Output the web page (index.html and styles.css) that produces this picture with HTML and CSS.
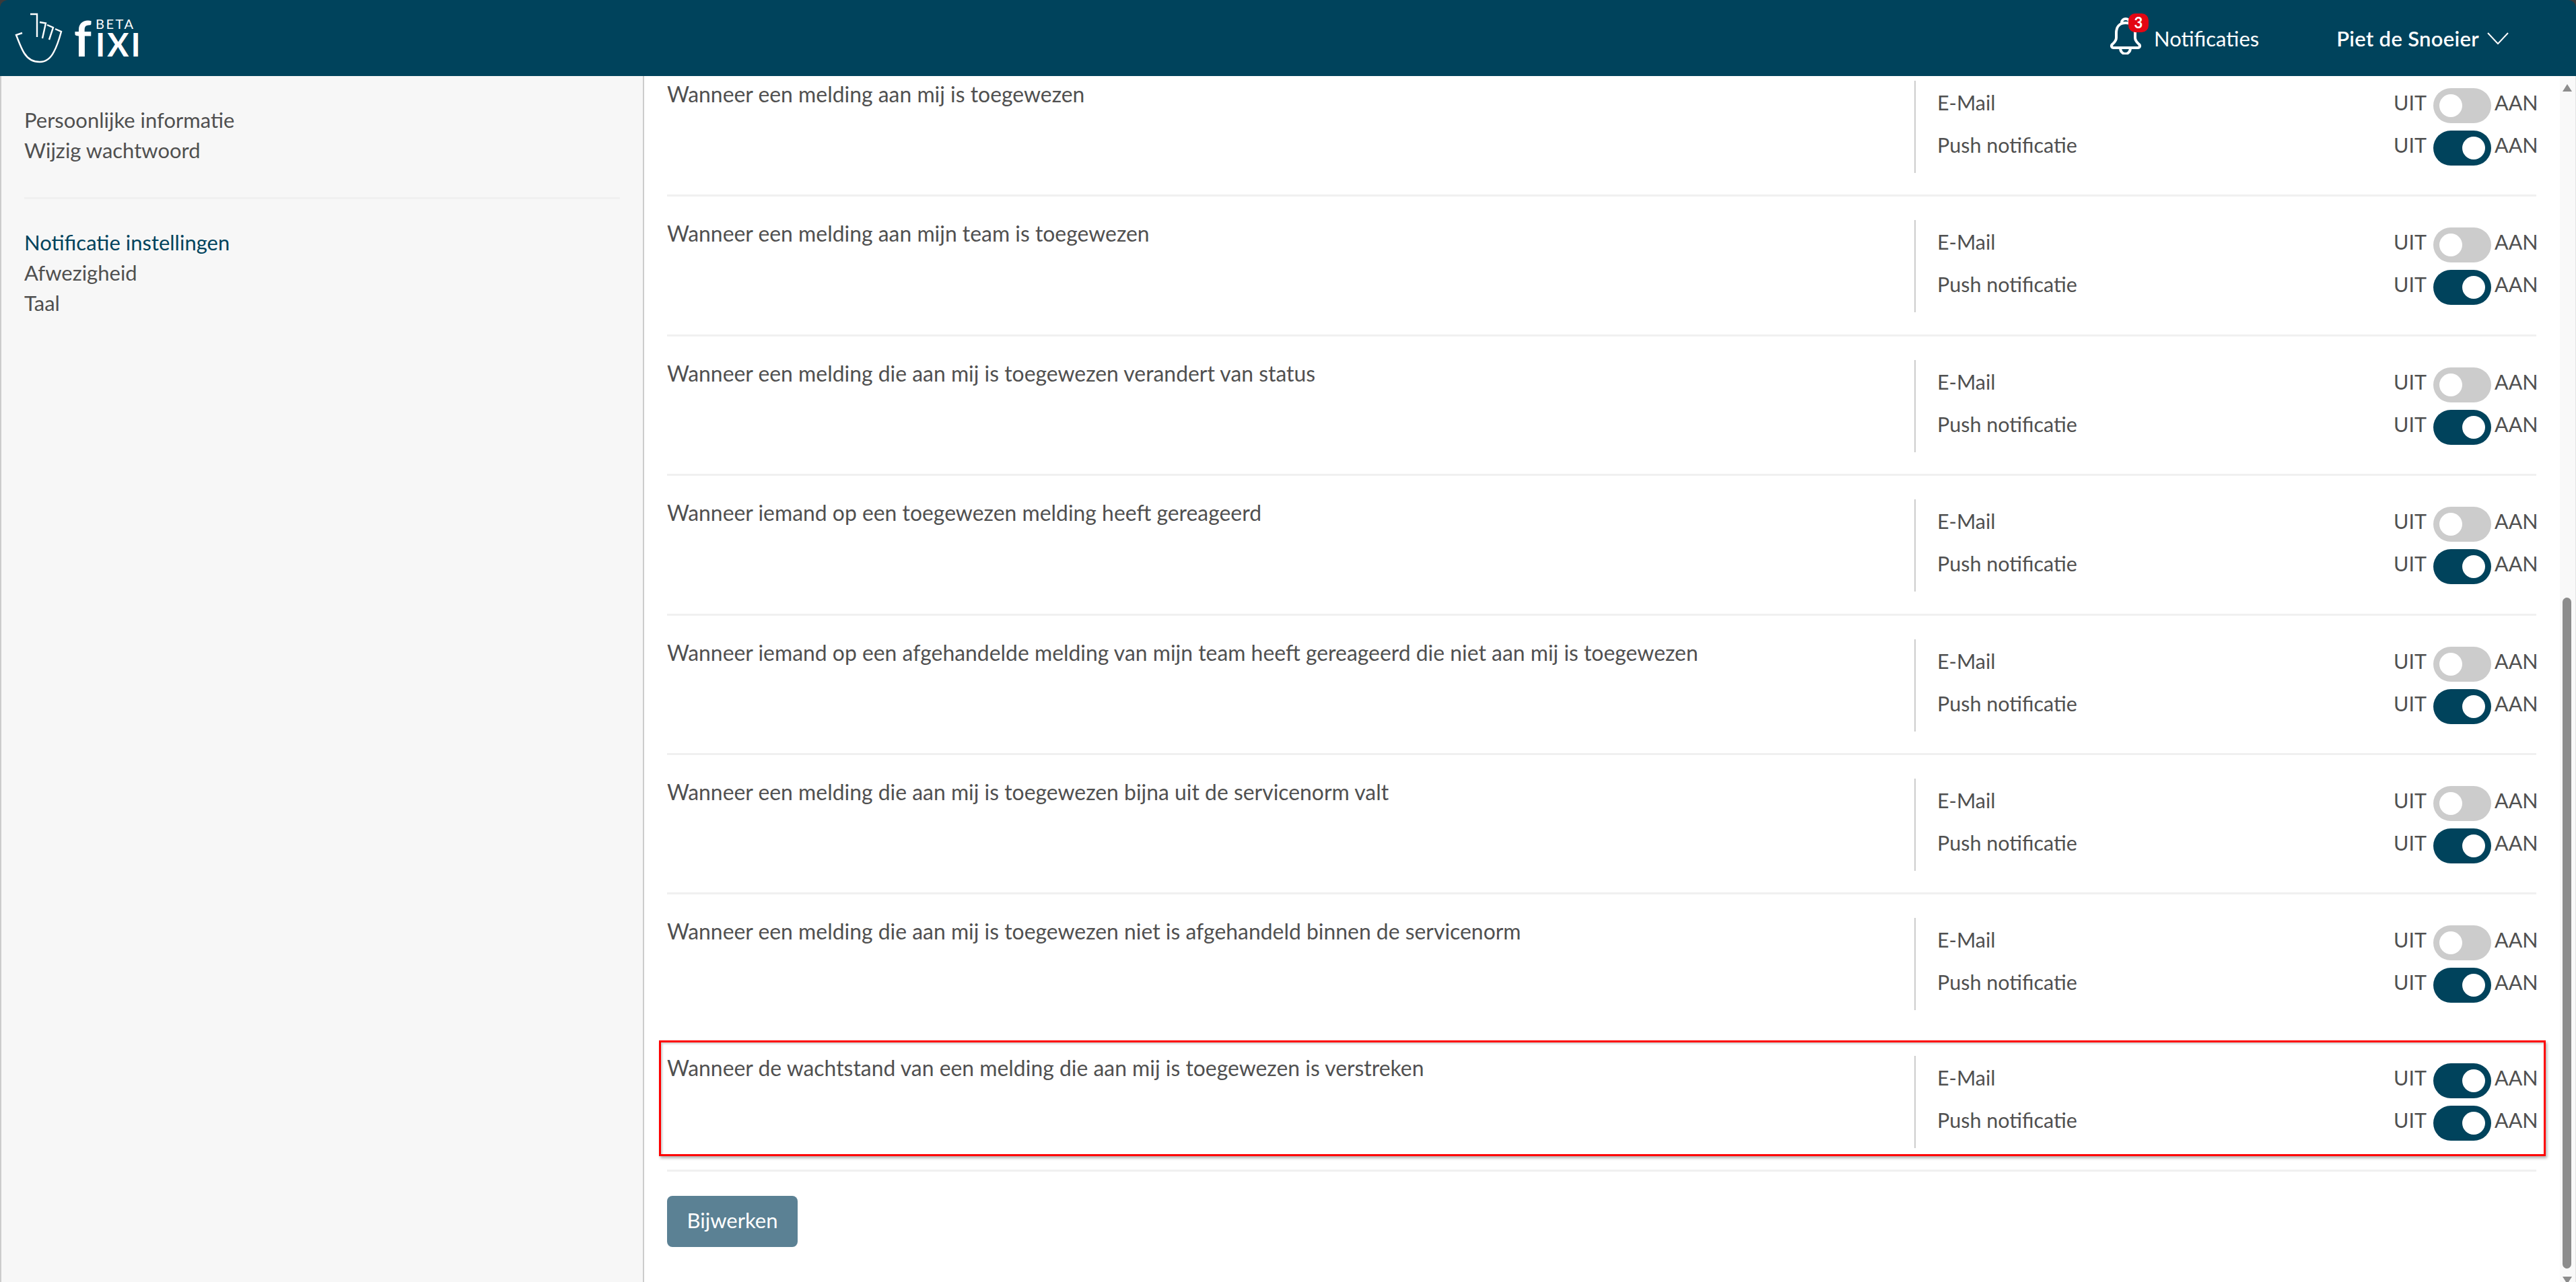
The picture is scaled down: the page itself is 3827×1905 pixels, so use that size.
FILE: index.html
```html
<!DOCTYPE html>
<html lang="nl">
<head>
<meta charset="utf-8">
<title>Fixi - Notificatie instellingen</title>
<link rel="stylesheet" href="styles.css">
</head>
<body>
<header class="topbar">
  <a class="logo">
    <svg class="logo-hand" viewBox="22 19 71 75" width="71" height="75" fill="none" stroke="#fff" stroke-width="2.4">
      <path d="M45 21H55L55 55"/>
      <path d="M59 33L68 34.500L63 57"/>
      <path d="M70 37L79 41L73 59"/>
      <path d="M82 43L91 47C88 58 85 68 80 77C75 87 68 92 59 92C49 92 41 87 36 79C31 71 28 62 24 52L33 49"/>
    </svg>
    <span class="logo-f">f</span>
    <span class="logo-stack"><span class="logo-beta">BETA</span><span class="logo-ixi">IXI</span></span>
  </a>
  <div class="topbar-right">
    <a class="notif">
      <span class="bell">
        <svg viewBox="0 0 46 56" width="46" height="56" fill="none" stroke="#fff" stroke-width="4" stroke-linejoin="round">
          <path d="M23 9C13 9 9 16 9 24V31C9 36 5 39 3 41C1 43 2 46 5 46H41C44 46 45 43 43 41C41 39 37 36 37 31V24C37 16 33 9 23 9Z"/>
          <path d="M17 9C17 1 29 1 29 9"/>
          <path d="M15 46C15 58 30 58 30 46"/>
        </svg>
        <span class="badge">3</span>
      </span>
      <span>Notificaties</span>
    </a>
    <a class="user">
      <span>Piet de Snoeier</span>
      <svg viewBox="0 0 32 18" width="32" height="18" fill="none" stroke="#fff" stroke-width="2"><path d="M1 1L16 17L31 1"/></svg>
    </a>
  </div>
</header>

<div class="shell">
  <aside class="sidebar">
    <nav class="side-group">
      <a>Persoonlijke informatie</a>
      <a>Wijzig wachtwoord</a>
    </nav>
    <hr class="side-rule">
    <nav class="side-group">
      <a class="active">Notificatie instellingen</a>
      <a>Afwezigheid</a>
      <a>Taal</a>
    </nav>
  </aside>

  <main class="content">
    <div class="scroller">
      <section class="row">
        <p class="row-title">Wanneer een melding aan mij is toegewezen</p>
        <div class="channels">
          <div class="channel"><span class="channel-name">E-Mail</span><span class="state">UIT</span><span class="toggle"></span><span class="state">AAN</span></div>
          <div class="channel"><span class="channel-name">Push notificatie</span><span class="state">UIT</span><span class="toggle on"></span><span class="state">AAN</span></div>
        </div>
      </section>
      <section class="row">
        <p class="row-title">Wanneer een melding aan mijn team is toegewezen</p>
        <div class="channels">
          <div class="channel"><span class="channel-name">E-Mail</span><span class="state">UIT</span><span class="toggle"></span><span class="state">AAN</span></div>
          <div class="channel"><span class="channel-name">Push notificatie</span><span class="state">UIT</span><span class="toggle on"></span><span class="state">AAN</span></div>
        </div>
      </section>
      <section class="row">
        <p class="row-title">Wanneer een melding die aan mij is toegewezen verandert van status</p>
        <div class="channels">
          <div class="channel"><span class="channel-name">E-Mail</span><span class="state">UIT</span><span class="toggle"></span><span class="state">AAN</span></div>
          <div class="channel"><span class="channel-name">Push notificatie</span><span class="state">UIT</span><span class="toggle on"></span><span class="state">AAN</span></div>
        </div>
      </section>
      <section class="row">
        <p class="row-title">Wanneer iemand op een toegewezen melding heeft gereageerd</p>
        <div class="channels">
          <div class="channel"><span class="channel-name">E-Mail</span><span class="state">UIT</span><span class="toggle"></span><span class="state">AAN</span></div>
          <div class="channel"><span class="channel-name">Push notificatie</span><span class="state">UIT</span><span class="toggle on"></span><span class="state">AAN</span></div>
        </div>
      </section>
      <section class="row">
        <p class="row-title">Wanneer iemand op een afgehandelde melding van mijn team heeft gereageerd die niet aan mij is toegewezen</p>
        <div class="channels">
          <div class="channel"><span class="channel-name">E-Mail</span><span class="state">UIT</span><span class="toggle"></span><span class="state">AAN</span></div>
          <div class="channel"><span class="channel-name">Push notificatie</span><span class="state">UIT</span><span class="toggle on"></span><span class="state">AAN</span></div>
        </div>
      </section>
      <section class="row">
        <p class="row-title">Wanneer een melding die aan mij is toegewezen bijna uit de servicenorm valt</p>
        <div class="channels">
          <div class="channel"><span class="channel-name">E-Mail</span><span class="state">UIT</span><span class="toggle"></span><span class="state">AAN</span></div>
          <div class="channel"><span class="channel-name">Push notificatie</span><span class="state">UIT</span><span class="toggle on"></span><span class="state">AAN</span></div>
        </div>
      </section>
      <section class="row row-plain">
        <p class="row-title">Wanneer een melding die aan mij is toegewezen niet is afgehandeld binnen de servicenorm</p>
        <div class="channels">
          <div class="channel"><span class="channel-name">E-Mail</span><span class="state">UIT</span><span class="toggle"></span><span class="state">AAN</span></div>
          <div class="channel"><span class="channel-name">Push notificatie</span><span class="state">UIT</span><span class="toggle on"></span><span class="state">AAN</span></div>
        </div>
      </section>
      <section class="row row-new">
        <div class="highlight"></div>
        <p class="row-title">Wanneer de wachtstand van een melding die aan mij is toegewezen is verstreken</p>
        <div class="channels">
          <div class="channel"><span class="channel-name">E-Mail</span><span class="state">UIT</span><span class="toggle on"></span><span class="state">AAN</span></div>
          <div class="channel"><span class="channel-name">Push notificatie</span><span class="state">UIT</span><span class="toggle on"></span><span class="state">AAN</span></div>
        </div>
      </section>
      <button class="submit">Bijwerken</button>
    </div>
  </main>

  <div class="scrollbar">
    <span class="arrow-up"></span>
    <span class="track"><span class="thumb"></span></span>
    <span class="arrow-down"></span>
  </div>
</div>
</body>
</html>
```

FILE: styles.css
```css
* { box-sizing: border-box; }
html, body { margin: 0; height: 100%; background: #3a3a3a; }
body {
  height: 1905px;
  overflow: hidden;
  display: flex;
  flex-direction: column;
  font-family: Lato, "Liberation Sans", sans-serif;
  font-size: 31px;
  color: #505050;
}
.topbar {
  height: 113px;
  flex: none;
  background: #00435c;
  border-radius: 12px 12px 0 0;
  display: flex;
  align-items: flex-start;
  justify-content: space-between;
  padding-left: 22px;
  color: #fff;
}
.logo { display: flex; align-items: flex-start; padding-top: 19px; }
.logo-hand { display: block; margin-right: 17px; }
.logo-f { font-size: 72px; line-height: 72px; height: 72px; width: 32px; margin-top: 1px; font-weight: 700; }
.logo-stack { display: flex; flex-direction: column; width: 62px; margin-top: 6px; }
.logo-beta { font-size: 20px; line-height: 20px; letter-spacing: 2.5px; white-space: nowrap; }
.logo-ixi { font-size: 48px; line-height: 42px; letter-spacing: 3px; font-weight: 700; white-space: nowrap; }
.topbar-right { display: flex; align-items: center; height: 100%; }
.notif { display: flex; align-items: center; margin-right: 115px; }
.bell { position: relative; width: 46px; height: 56px; margin-right: 19px; top: -4px; }
.bell svg { display: block; }
.badge {
  position: absolute;
  left: 27px;
  top: -5px;
  width: 30px;
  height: 28px;
  border-radius: 10px;
  background: #e30613;
  color: #fff;
  font-size: 22px;
  font-weight: 700;
  line-height: 28px;
  text-align: center;
}
.user { display: flex; align-items: center; margin-right: 100px; font-weight: 600; letter-spacing: .3px; }
.user svg { margin-left: 12px; }
.shell { flex: 1; min-height: 0; display: flex; background: #fff; }
.sidebar {
  width: 957px;
  flex: none;
  background: #f7f7f7;
  border-left: 2px solid #ccc;
  border-right: 2px solid #ccc;
  padding: 43px 34px 0;
}
.side-group { display: flex; flex-direction: column; }
.side-group a { height: 45px; line-height: 45px; display: block; }
.side-group a.active { color: #00435c; }
.side-rule { border: 0; height: 3px; background: #f0f0f0; margin: 47px 0 42px; }
.content { flex: 1; min-width: 0; overflow: hidden; padding-left: 34px; }
.scroller { margin-top: -28px; padding-right: 35px; }
.row {
  height: 207.4px;
  border-bottom: 3px solid #f0f0f0;
  display: flex;
  position: relative;
}
.row-plain { border-bottom-color: transparent; }
.row-title { margin: 0; width: 1853px; padding-top: 33px; line-height: 45px; font-size: 31.9px; }
.channels {
  flex: 1;
  height: 137px;
  margin-top: 35px;
  border-left: 2px solid #ccc;
  padding-left: 32px;
  padding-top: 11px;
  display: flex;
  flex-direction: column;
  gap: 11px;
  font-size: 30.5px;
}
.channel { height: 52px; display: flex; align-items: flex-start; line-height: 42px; }
.channel-name { flex: 1; }
.state { display: block; }
.state:last-child { width: 62px; white-space: nowrap; }
.toggle {
  display: block;
  width: 86px;
  height: 52px;
  margin: 0 5px 0 10px;
  background: #ccc;
  border-radius: 26px;
  position: relative;
}
.toggle::after {
  content: "";
  position: absolute;
  left: 9px;
  top: 9px;
  width: 34px;
  height: 34px;
  border-radius: 50%;
  background: #fff;
}
.toggle.on { background: #00435c; }
.toggle.on::after { left: 43px; }
.row-new { height: 207px; margin-top: -3px; }
.row-new .row-title { padding-top: 31px; }
.highlight {
  position: absolute;
  left: -12px;
  right: -14px;
  top: 12px;
  height: 172px;
  border: 3px solid #f00;
  box-shadow: 2px 3px 4px rgba(0, 0, 0, .3), inset 2px 2px 3px rgba(0, 0, 0, .2);
  pointer-events: none;
}
.submit {
  display: block;
  margin-top: 36px;
  width: 194px;
  height: 76px;
  border: 0;
  border-radius: 8px;
  background: #5b8194;
  color: #fff;
  font: inherit;
  padding: 0 0 4px;
}
.scrollbar {
  width: 24px;
  flex: none;
  background: #f9f9f9;
  border-right: 1px solid #e4e4e4;
  display: flex;
  flex-direction: column;
  align-items: center;
  padding: 12px 2px 0 0;
}
.arrow-up, .arrow-down {
  flex: none;
  width: 0;
  height: 0;
  border-left: 7px solid transparent;
  border-right: 7px solid transparent;
}
.arrow-up { border-bottom: 11px solid #8c8c8c; }
.arrow-down { border-top: 11px solid #8c8c8c; margin-bottom: -3px; }
.track { flex: 1; width: 13px; padding: 752px 0 12px; display: flex; }
.thumb { flex: 1; width: 13px; background: #8c8c8c; border-radius: 7px; }
```
